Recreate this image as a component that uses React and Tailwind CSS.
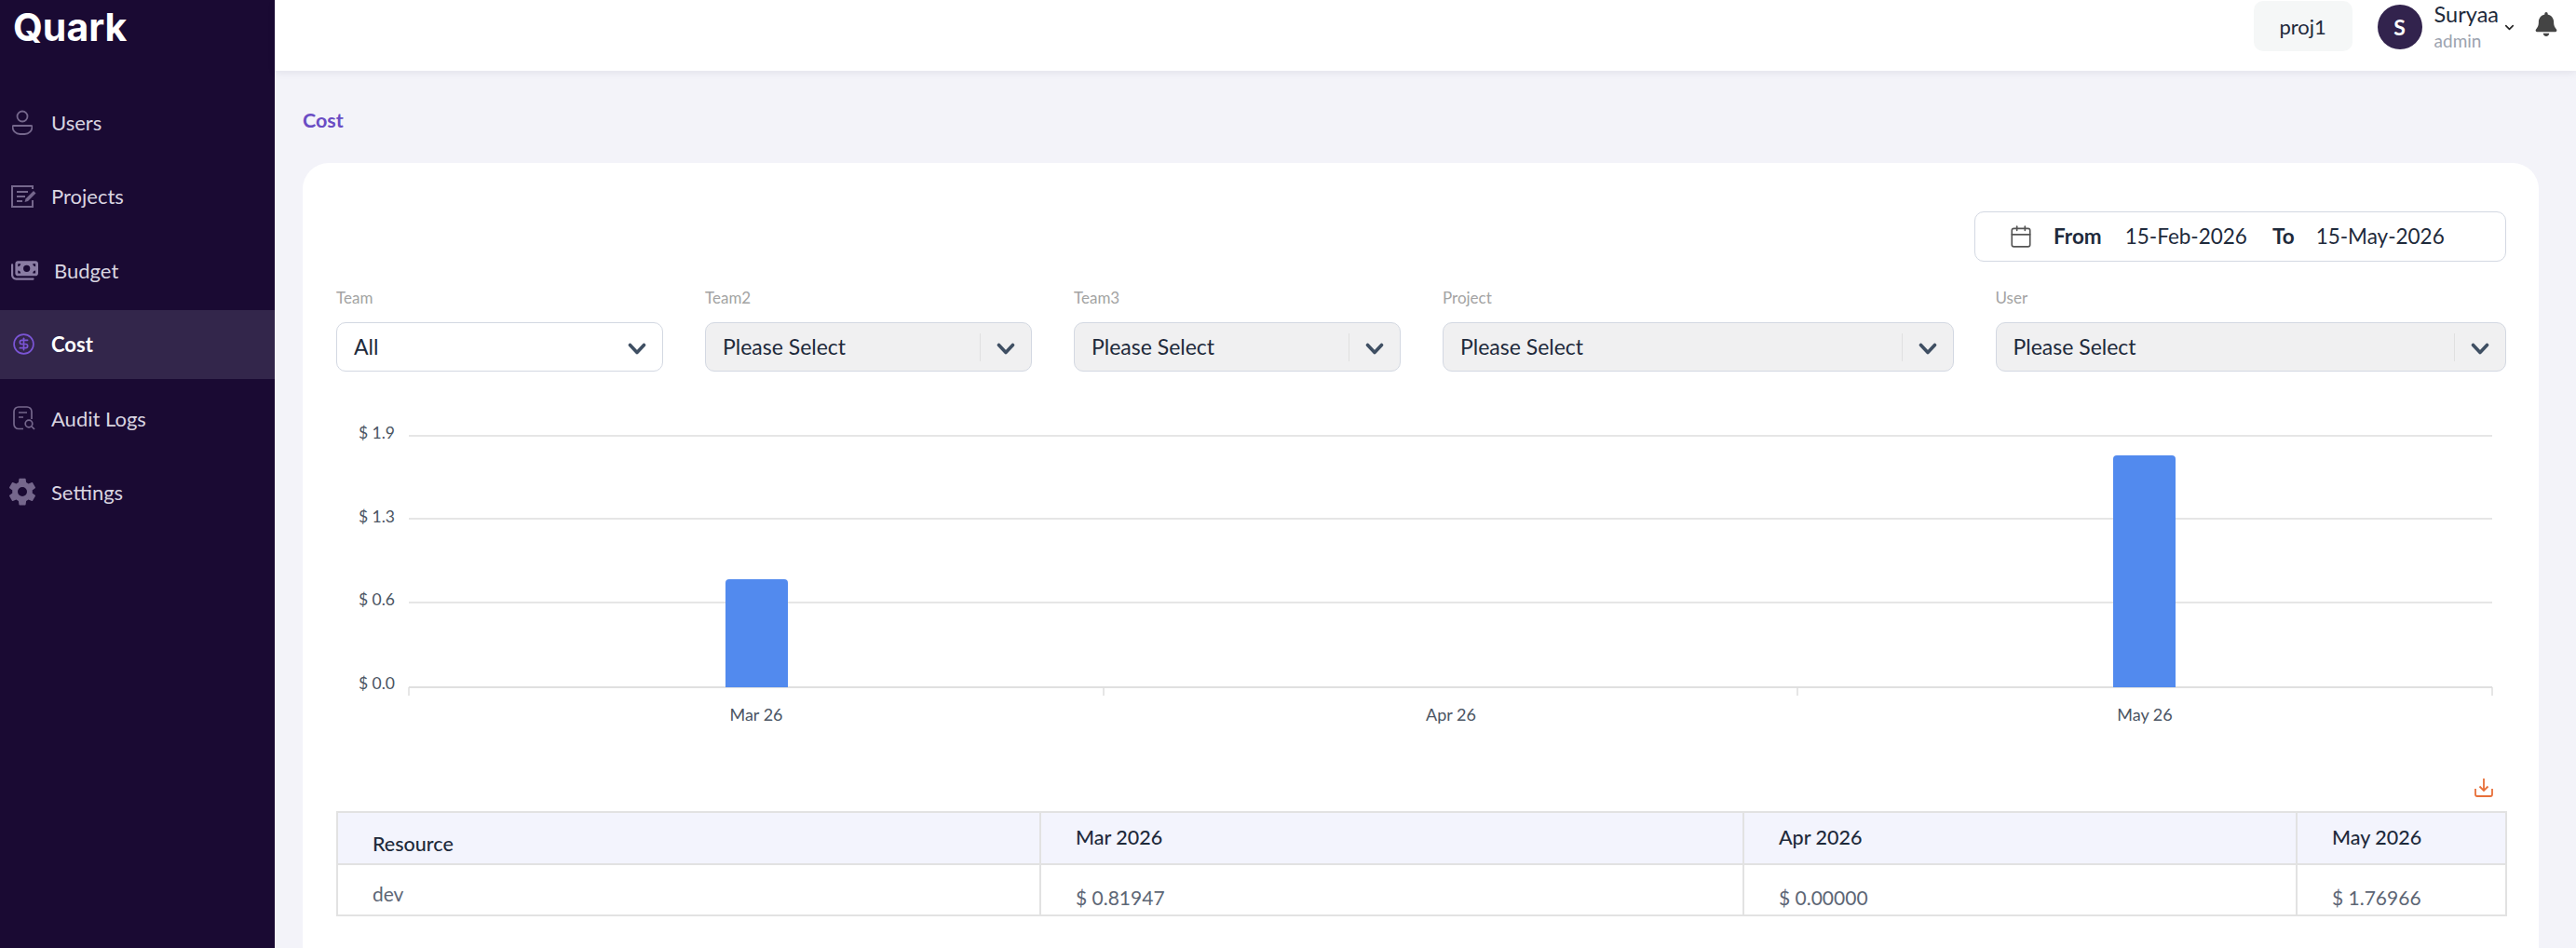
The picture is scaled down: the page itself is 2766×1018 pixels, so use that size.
import React from 'react';
import { Calendar, CircleDollarSign, ChevronDown } from 'lucide-react';
import { FaMoneyBills, FaBell } from 'react-icons/fa6';
import { IoSettingsSharp } from 'react-icons/io5';

const UsersIcon = () => (
  <svg width="22" height="28" viewBox="0 0 22 28" fill="none" stroke="#75678c" strokeWidth="1.8">
    <circle cx="11" cy="7" r="5.5" />
    <path d="M1.5 17h19c.6 0 1 .5 1 1 0 4.500-3.500 8-8 8h-5c-4.500 0-8-3.500-8-8 0-.5.400-1 1-1z" />
  </svg>
);

const ProjectsIcon = () => (
  <svg width="28" height="24" viewBox="0 0 28 24" fill="none" stroke="#75678c" strokeWidth="2">
    <path d="M23 4V1H1v22h22v-7" />
    <path d="M6 7h12M6 12h9M6 17h6" />
    <path d="M14.500 18l1-3.500L24 6l2.500 2.500-8.500 8.500z" fill="#75678c" stroke="none" />
  </svg>
);

const AuditIcon = () => (
  <svg width="24" height="26" viewBox="0 0 24 26" fill="none" stroke="#75678c" strokeWidth="1.7">
    <path d="M11 24.500H6a5 5 0 0 1-5-5V6a5 5 0 0 1 5-5h9a5 5 0 0 1 5 5v8" />
    <path d="M6 7h9M6 12h5" />
    <circle cx="17" cy="19" r="3.800" />
    <path d="M20 22l3 3" />
  </svg>
);

const nav = [
  { icon: <UsersIcon />, label: 'Users', slot: 'w-[55px] pl-[13px]' },
  { icon: <ProjectsIcon />, label: 'Projects', slot: 'w-[55px] pl-[12px]' },
  { icon: <FaMoneyBills size={29} color="#8a7ca3" />, label: 'Budget', slot: 'w-[58px] pl-[12px]' },
  { icon: <CircleDollarSign size={25} color="#7b55d6" strokeWidth={1.6} />, label: 'Cost', slot: 'w-[55px] pl-[13px]', active: true },
  { icon: <AuditIcon />, label: 'Audit Logs', slot: 'w-[55px] pl-[14px]' },
  { icon: <IoSettingsSharp size={32} color="#75678c" />, label: 'Settings', slot: 'w-[55px] pl-[8px]' },
];

const selects = [
  { label: 'Team', value: 'All', plain: true },
  { label: 'Team2', value: 'Please Select' },
  { label: 'Team3', value: 'Please Select' },
  { label: 'Project', value: 'Please Select' },
  { label: 'User', value: 'Please Select' },
];

const SelectChevron = () => (
  <svg width="20" height="13" viewBox="0 0 20 13" fill="none" stroke="#3f4f63" strokeWidth="3.600" strokeLinecap="round" strokeLinejoin="round" className="mt-[4px]">
    <path d="M2.500 2.500 10 10.500l7.500-8" />
  </svg>
);

function Chart() {
  // plot coordinates are page pixels minus the chart origin (361, 450)
  const grid = [18, 107, 197];
  return (
    <svg width="2329" height="340" viewBox="0 0 2329 340" className="block" fontFamily="Lato, sans-serif">
      {grid.map((y) => (
        <line key={y} x1="78" x2="2315" y1={y} y2={y} stroke="#e6e6e6" strokeWidth="2" />
      ))}
      <line x1="78" x2="2315" y1="288" y2="288" stroke="#e0e0e0" strokeWidth="2" />
      {[78, 824, 1569, 2315].map((x) => (
        <line key={x} x1={x} x2={x} y1="288" y2="297" stroke="#dedede" strokeWidth="1.500" />
      ))}
      <path d="M418 288V176a4 4 0 0 1 4-4h59a4 4 0 0 1 4 4v112z" fill="#528aee" />
      <path d="M1908 288V43a4 4 0 0 1 4-4h59a4 4 0 0 1 4 4v245z" fill="#528aee" />
      {[['$ 1.9', 21], ['$ 1.3', 111], ['$ 0.6', 200], ['$ 0.0', 290]].map(([t, y]) => (
        <text key={t} x="63" y={y} textAnchor="end" fontSize="17.500" fill="#4b5563">{t}</text>
      ))}
      {[['Mar 26', 451], ['Apr 26', 1197], ['May 26', 1942]].map(([t, x]) => (
        <text key={t} x={x} y="324" textAnchor="middle" fontSize="18" fill="#4b5563">{t}</text>
      ))}
    </svg>
  );
}

export default function App() {
  return (
    <div className="flex h-[1018px] overflow-hidden bg-[#f3f3f9] font-['Lato',sans-serif]">
      {/* Sidebar */}
      <aside className="w-[295px] shrink-0 bg-[#1a0a33] flex flex-col">
        <div className="h-[92px] pl-[14px] font-['Inter',sans-serif] font-bold text-[41px] leading-[58px] text-white">Quark</div>
        <nav className="flex flex-col">
          {nav.map((item) => (
            <div
              key={item.label}
              className={`flex items-center ${item.active ? 'bg-[#33264b] h-[74px] my-[2.75px]' : 'h-[79.3px]'}`}
            >
              <span className={`${item.slot} flex items-center shrink-0`}>{item.icon}</span>
              <span className={`text-[22px] ${item.active ? 'font-bold text-white' : 'text-[#d9d5e1]'}`}>{item.label}</span>
            </div>
          ))}
        </nav>
      </aside>

      <div className="flex-1 min-w-0 flex flex-col">
        {/* Header */}
        <header className="h-[76px] shrink-0 bg-white shadow-[0_2px_8px_rgba(30,30,60,0.08)] flex items-start justify-end pr-[19px] pt-[1px] text-[#1e2a3b]">
          <div className="w-[106px] h-[54px] rounded-[10px] bg-[#f5f7f7] flex items-center justify-center text-[22px]">proj1</div>
          <div className="w-[48px] h-[48px] mt-[4px] ml-[27px] rounded-full bg-[#32234d] flex items-center justify-center text-white font-bold text-[23px]">S</div>
          <div className="ml-[13px] flex flex-col">
            <span className="text-[23.5px] leading-[28px]">Suryaa</span>
            <span className="text-[19px] leading-[24px] mt-[3px] text-[#9ca3af]">admin</span>
          </div>
          <ChevronDown size={15} color="#222" strokeWidth={2.500} className="ml-[4px] mt-[21px]" />
          <FaBell size={26} color="#444444" className="ml-[19px] mt-[12px]" />
        </header>

        <main className="flex-1 min-h-0 pl-[30px] pr-[40px]">
          <div className="h-[99px] pt-[38px] text-[21.5px] leading-[30px] font-bold text-[#6a4cc4]">Cost</div>
          <div className="h-[900px] bg-white rounded-[28px] pl-[36px] pr-[35px] pt-[52px]">
            <div className="flex justify-end">
              <div className="w-[571px] h-[54px] border border-[#d3d8e2] rounded-[10px] flex items-center pl-[36px] text-[22.5px] text-[#1e2a3b]">
                <Calendar size={26} color="#555" strokeWidth={1.500} />
                <span className="ml-[22px] font-bold">From</span>
                <span className="ml-[25px]">15-Feb-2026</span>
                <span className="ml-[27px] font-bold">To</span>
                <span className="ml-[23px]">15-May-2026</span>
              </div>
            </div>

            {/* Filters */}
            <div className="grid grid-cols-[351px_351px_351px_1fr_1fr] gap-x-[45px] mt-[27px]">
              {selects.map((s) => (
                <div key={s.label}>
                  <div className="h-[38px] text-[17px] leading-[24px] text-[#a3a3a3]">{s.label}</div>
                  <div className={`h-[53px] border border-[#d3d8e2] rounded-[10px] flex items-center pl-[18px] pr-[17px] text-[23px] text-[#1e2a3b] ${s.plain ? 'bg-white' : 'bg-[#f0f0f1]'}`}>
                    <span className="flex-1 -mt-[1px]">{s.value}</span>
                    {!s.plain && <span className="w-px h-[30px] bg-[#e0e0e0] mr-[17px]" />}
                    <SelectChevron />
                  </div>
                </div>
              ))}
            </div>

            <div className="mt-[51px]">
              <Chart />
            </div>

            <div className="flex justify-end pr-[14px] mt-[46px] h-[35px] items-start">
              <svg width="20" height="20" viewBox="0 0 20 20" fill="none" stroke="#e8703a" strokeWidth="1.800">
                <path d="M10 0v13M5.500 8.500 10 13l4.500-4.500" />
                <path d="M1 11v6c0 1 .8 2 2 2h14c1.200 0 2-1 2-2v-6" />
              </svg>
            </div>

            {/* Table */}
            <table className="w-[2329px] table-fixed border-collapse text-[21px] text-left">
              <colgroup>
                <col className="w-[755px]" />
                <col className="w-[755px]" />
                <col className="w-[594px]" />
                <col className="w-[225px]" />
              </colgroup>
              <thead className="bg-[#f3f4fd] text-[#1e2a3b]">
                <tr className="h-[56px]">
                  <th className="border-2 border-[#e2e2e2] pl-[37px] pt-[12px] font-medium text-[21.5px]">Resource</th>
                  <th className="border-2 border-[#e2e2e2] pl-[37px] pb-[2px] font-medium text-[21.5px]">Mar 2026</th>
                  <th className="border-2 border-[#e2e2e2] pl-[37px] pb-[2px] font-medium text-[21.5px]">Apr 2026</th>
                  <th className="border-2 border-[#e2e2e2] pl-[37px] pb-[2px] font-medium text-[21.5px]">May 2026</th>
                </tr>
              </thead>
              <tbody className="text-[#5d6675]">
                <tr className="h-[55px]">
                  <td className="border-2 border-[#e2e2e2] pl-[37px] pt-[8px]">dev</td>
                  <td className="border-2 border-[#e2e2e2] pl-[37px] pt-[16px]">$ 0.81947</td>
                  <td className="border-2 border-[#e2e2e2] pl-[37px] pt-[16px]">$ 0.00000</td>
                  <td className="border-2 border-[#e2e2e2] pl-[37px] pt-[16px]">$ 1.76966</td>
                </tr>
              </tbody>
            </table>
          </div>
        </main>
      </div>
    </div>
  );
}
